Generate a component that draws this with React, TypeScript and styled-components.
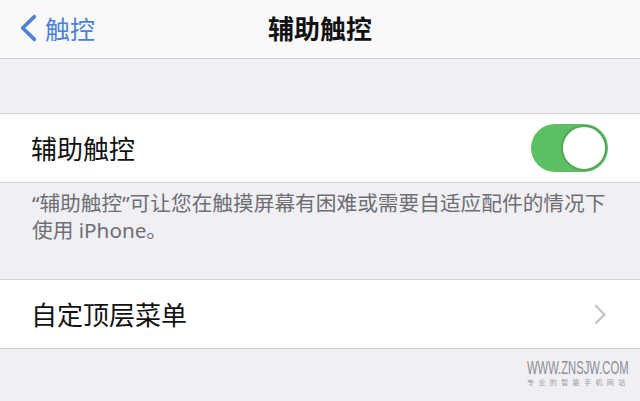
import React, { useState } from 'react';
import styled, { createGlobalStyle } from 'styled-components';

const GlobalStyle = createGlobalStyle`
	html, body {
		margin: 0;
		padding: 0;
		background: #efeff4;
	}
	body {
		width: 640px;
		height: 401px;
		overflow: hidden;
		font-family: 'Noto Sans CJK SC', 'Noto Sans', sans-serif;
		-webkit-font-smoothing: antialiased;
	}
`;

const Page = styled.div`
	width: 640px;
	height: 401px;
	display: flex;
	flex-direction: column;
	background: #efeff4;
`;

const NavBar = styled.div`
	height: 58px;
	display: grid;
	grid-template-columns: 1fr auto 1fr;
	align-items: center;
	background: #f9f9f9;
	border-bottom: 1px solid #cfcfd3;
`;

const BackButton = styled.div`
	display: flex;
	align-items: center;
	gap: 7px;
	padding-left: 19px;
	color: #4a82d6;
	font-size: 25px;
	line-height: 1;
	margin-top: -2px;
`;

const Title = styled.div`
	font-size: 26px;
	font-weight: 700;
	color: #111;
	margin-top: -3px;
`;

const Spacer = styled.div<{ $h: number }>`
	height: ${(p) => p.$h}px;
`;

const Cell = styled.div<{ $top?: boolean }>`
	height: 68px;
	display: flex;
	align-items: center;
	justify-content: space-between;
	padding: 0 32px 0 31px;
	background: #fff;
	border-top: ${(p) => (p.$top ? '1px solid #d2d2d6' : 'none')};
	border-bottom: 1px solid #d2d2d6;
`;

const Label = styled.span`
	font-size: 26px;
	color: #111;
	line-height: 1;
`;

const Track = styled.button<{ $on: boolean }>`
	width: 77px;
	height: 48px;
	padding: 0;
	border: none;
	border-radius: 24px;
	background: ${(p) => (p.$on ? '#5dbf63' : '#e5e5ea')};
	display: flex;
	align-items: center;
	justify-content: ${(p) => (p.$on ? 'flex-end' : 'flex-start')};
	cursor: pointer;
`;

const Knob = styled.span`
	width: 42px;
	height: 42px;
	margin: 0 1px;
	border-radius: 50%;
	background: #fff;
	border: 2px solid #55a65b;
`;

const Note = styled.div`
	height: 97px;
	box-sizing: border-box;
	padding: 7px 20px 0 32px;
	font-family: 'Noto Sans', 'Noto Sans CJK SC', sans-serif;
	font-size: 20.7px;
	line-height: 27px;
	color: #6e6e73;
	white-space: nowrap;
	border-bottom: 1px solid #d2d2d6;
`;

const Footer = styled.div`
	flex: 1;
	display: flex;
	justify-content: flex-end;
	padding: 12px 10px 0 0;
`;

const Mark = styled.div`
	width: 103px;
	display: flex;
	flex-direction: column;
	color: #8e8e93;
`;

const MarkTop = styled.div`
	width: 103px;
	height: 14px;
	font-family: 'Liberation Sans', Arial, sans-serif;
	font-size: 19px;
	line-height: 14px;
	white-space: nowrap;
	transform: scaleX(0.59);
	transform-origin: left top;
`;

const MarkBottom = styled.div`
	font-size: 7px;
	line-height: 9px;
	letter-spacing: 4.4px;
	color: #9a9a9e;
	white-space: nowrap;
	margin-top: 3px;
`;

function Chevron({ color, w, h, sw }: { color: string; w: number; h: number; sw: number }) {
	return (
		<svg width={w} height={h} viewBox={`0 0 ${w} ${h}`} fill="none">
			<path
				d={`M${w - sw} ${sw} L${sw} ${h / 2} L${w - sw} ${h - sw}`}
				stroke={color}
				strokeWidth={sw}
				strokeLinecap="round"
				strokeLinejoin="round"
			/>
		</svg>
	);
}

export default function App() {
	const [on, setOn] = useState(true);

	return (
		<Page>
			<GlobalStyle />
			<NavBar>
				<BackButton>
					<Chevron color="#4a82d6" w={19} h={30} sw={3.6} />
					<span>触控</span>
				</BackButton>
				<Title>辅助触控</Title>
				<div />
			</NavBar>
			<Spacer $h={54} />
			<Cell $top>
				<Label>辅助触控</Label>
				<Track $on={on} onClick={() => setOn(!on)} aria-label="辅助触控">
					<Knob />
				</Track>
			</Cell>
			<Note>
				“辅助触控”可让您在触摸屏幕有困难或需要自适应配件的情况下
				<br />
				使用 iPhone。
			</Note>
			<Cell>
				<Label>自定顶层菜单</Label>
				<svg width="13" height="21" viewBox="0 0 13 21" fill="none" style={{ marginRight: 1 }}>
					<path d="M2 2 L10.5 10.5 L2 19" stroke="#c4c4c8" strokeWidth="2.4" strokeLinecap="round" strokeLinejoin="round" />
				</svg>
			</Cell>
			<Footer>
				<Mark>
					<MarkTop>WWW.ZNSJW.COM</MarkTop>
					<MarkBottom>专业的智能手机网站</MarkBottom>
				</Mark>
			</Footer>
		</Page>
	);
}
